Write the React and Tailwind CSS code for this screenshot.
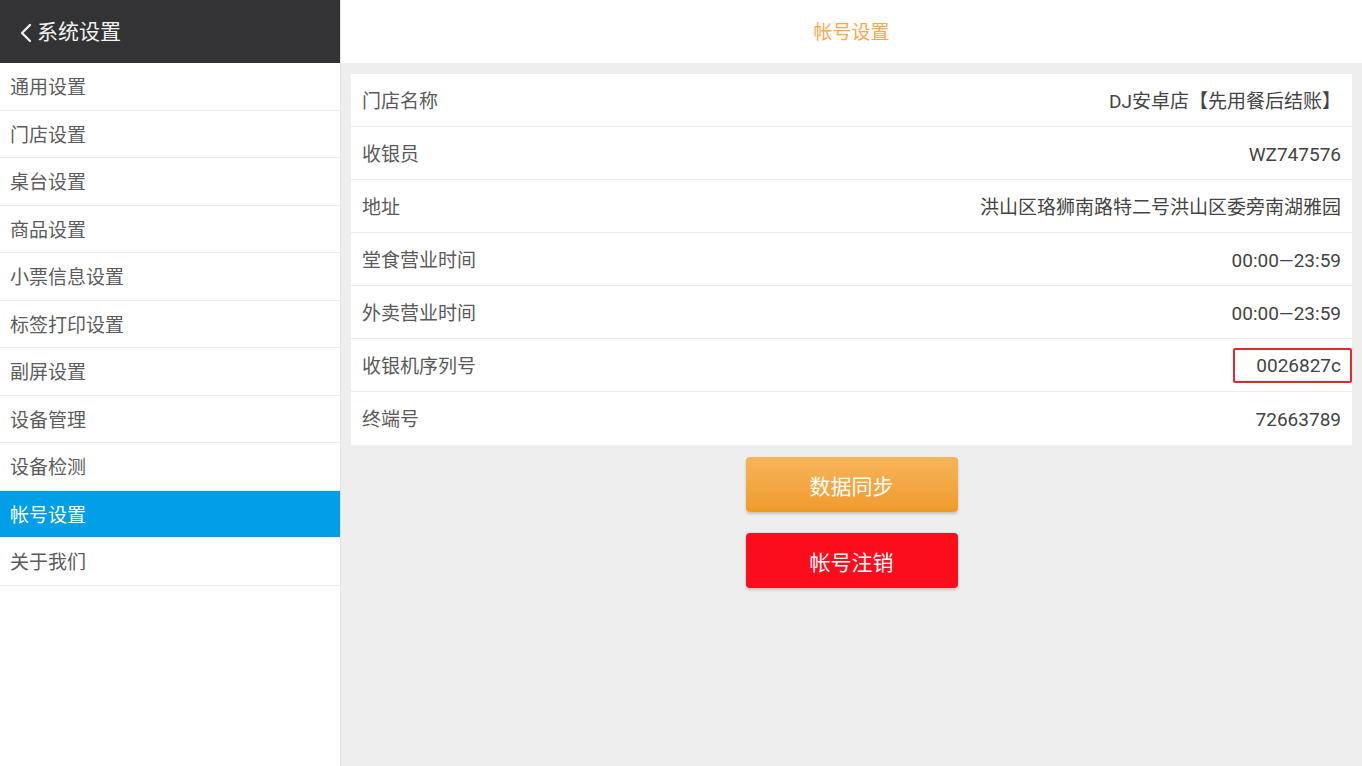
import React from 'react';

const menu = [
  '通用设置',
  '门店设置',
  '桌台设置',
  '商品设置',
  '小票信息设置',
  '标签打印设置',
  '副屏设置',
  '设备管理',
  '设备检测',
  '帐号设置',
  '关于我们',
];

const rows = [
  { label: '门店名称', value: 'DJ安卓店【先用餐后结账】' },
  { label: '收银员', value: 'WZ747576' },
  { label: '地址', value: '洪山区珞狮南路特二号洪山区委旁南湖雅园' },
  { label: '堂食营业时间', value: '00:00—23:59' },
  { label: '外卖营业时间', value: '00:00—23:59' },
  { label: '收银机序列号', value: '0026827c', marked: true },
  { label: '终端号', value: '72663789' },
];

const font = { fontFamily: 'Roboto, "Noto Sans CJK SC", sans-serif' };

export default function App() {
  return (
    <div className="flex h-[766px] w-[1362px] overflow-hidden bg-white" style={font}>
      {/* Sidebar */}
      <aside className="flex w-[341px] shrink-0 flex-col border-r border-[#e4e4e4] bg-white">
        <div className="flex h-[63px] items-center bg-[#333335] pl-[19px] pt-[2px] text-[21px] text-[#f2f2f2]">
          <svg width="15" height="20" viewBox="0 0 15 20" className="mr-[3px]">
            <path d="M11 2 L3 10 L11 18" fill="none" stroke="#f2f2f2" strokeWidth="2.3" strokeLinecap="round" strokeLinejoin="round" />
          </svg>
          <span>系统设置</span>
        </div>
        {menu.map((item) => {
          const active = item === '帐号设置';
          return (
            <div
              key={item}
              className={`flex h-[47.5px] items-center border-b border-[#ececec] pl-[10px] pt-[4px] text-[19px] ${
                active ? 'bg-[#029fe6] text-white' : 'text-[#5c5c5c]'
              }`}
            >
              {item}
            </div>
          );
        })}
      </aside>

      {/* Main */}
      <main className="flex flex-1 flex-col bg-[#eeeeee]">
        <div className="flex h-[63px] shrink-0 items-center justify-center bg-white pt-[4px] text-[19px] text-[#f7a84e]">
          帐号设置
        </div>
        <div className="flex flex-col px-[10px] pt-[11px]">
          <div className="flex flex-col bg-white">
            {rows.map((row, i) => (
              <div
                key={row.label}
                className={`flex h-[53px] items-center justify-between px-[11px] pt-[4px] text-[19px] ${
                  i < rows.length - 1 ? 'border-b border-[#ebebeb]' : ''
                }`}
              >
                <span className="text-[#5a5a5a]">{row.label}</span>
                {row.marked ? (
                  <span className="-mr-[11px] -mt-[4px] flex h-[35px] w-[119px] items-center justify-end rounded-[2px] border-2 border-[#e8262b] pr-[9px] pt-[3px] text-[#444]">
                    {row.value}
                  </span>
                ) : (
                  <span className="text-[#444]">{row.value}</span>
                )}
              </div>
            ))}
          </div>
          <div className="mt-[12px] flex flex-col items-center gap-[21px]">
            <button className="h-[55px] w-[212px] rounded-[4px] bg-gradient-to-b from-[#f6b559] to-[#f19a2a] pt-[7px] text-[21px] text-white shadow-[0_2px_3px_rgba(0,0,0,0.18)]">
              数据同步
            </button>
            <button className="h-[55px] w-[212px] rounded-[4px] bg-[#fb0d1b] pt-[7px] text-[21px] text-white shadow-[0_2px_3px_rgba(0,0,0,0.18)]">
              帐号注销
            </button>
          </div>
        </div>
      </main>
    </div>
  );
}
